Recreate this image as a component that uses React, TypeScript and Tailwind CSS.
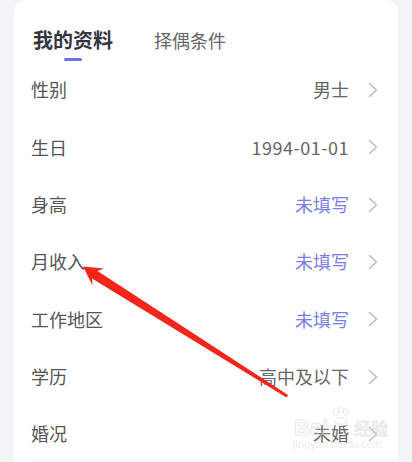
import React from "react";

const rows: { label: string; value: string; blue?: boolean; digits?: boolean }[] = [
  { label: "性别", value: "男士" },
  { label: "生日", value: "1994-01-01", digits: true },
  { label: "身高", value: "未填写", blue: true },
  { label: "月收入", value: "未填写", blue: true },
  { label: "工作地区", value: "未填写", blue: true },
  { label: "学历", value: "高中及以下" },
  { label: "婚况", value: "未婚" },
];

function Chevron() {
  return (
    <svg width="10" height="16" viewBox="0 0 10 16" fill="none" className="shrink-0">
      <path d="M1.5 1.5 L8.5 8 L1.5 14.5" stroke="#b8b8b8" strokeWidth="1.4" strokeLinecap="round" strokeLinejoin="round" />
    </svg>
  );
}

export default function App() {
  const font = { fontFamily: '"Noto Sans CJK SC", "Noto Sans", sans-serif' };
  return (
    <div className="relative w-[412px] h-[462px] overflow-hidden bg-[#f3f4f6]" style={font}>
      <div className="ml-[14px] w-[384px] h-[480px] bg-white rounded-t-[12px]">
        <div className="h-[61.33px] flex items-start pl-[19px] pt-[25px] gap-[41px]">
          <div className="flex flex-col items-center">
            <span className="text-[20px] leading-[30px] font-bold text-[#333640]">我的资料</span>
            <span className="mt-[3px] w-[18px] h-[3px] rounded-full bg-[#6e72ec]" />
          </div>
          <span className="text-[18px] leading-[30px] text-[#666]">择偶条件</span>
        </div>
        {rows.map((r) => (
          <div key={r.label} className="h-[57.33px] flex items-center justify-between pl-[17px] pr-[20px]">
            <span className="text-[18px] text-[#555]">{r.label}</span>
            <div className="flex items-center gap-[19px]">
              <span
                className={
                  "text-[18px] " +
                  (r.blue ? "text-[#7b7fe4]" : "text-[#666]") +
                  (r.digits ? " tracking-[0.5px]" : "")
                }
              >
                {r.value}
              </span>
              <Chevron />
            </div>
          </div>
        ))}
      </div>
      <div className="absolute left-[31px] right-[14px] top-[460px] h-[1px] bg-[#eeeeee]" />
      {/* watermark */}
      <div className="absolute left-[292px] top-[404px] w-[100px] h-[50px] pointer-events-none opacity-60">
        <svg className="absolute left-[38px] top-[2px]" width="22" height="20" viewBox="0 0 22 20">
          <g fill="none" stroke="#d8d8d8" strokeWidth="1">
            <ellipse cx="6" cy="6" rx="2.5" ry="3.2" />
            <ellipse cx="11" cy="3.5" rx="2.5" ry="3" />
            <ellipse cx="16" cy="6" rx="2.5" ry="3.2" />
            <path d="M5 16 C6 10 16 10 17 16 C16 19 6 19 5 16Z" />
          </g>
        </svg>
        <span className="absolute left-[2px] top-[12px] text-[22px] leading-[24px] font-bold text-transparent" style={{ WebkitTextStroke: "1px #dcdcdc", fontFamily: '"Liberation Sans", sans-serif' }}>Bai</span>
        <span className="absolute left-[62px] top-[13px] text-[17px] leading-[22px] text-transparent" style={{ WebkitTextStroke: "1px #dcdcdc" }}>经验</span>
        <span className="absolute left-[1px] top-[33px] text-[11px] leading-[14px] text-[#e2e2e2]" style={{ fontFamily: '"Liberation Sans", sans-serif' }}>jingyan.baidu.com</span>
      </div>
      {/* red arrow */}
      <svg className="absolute left-0 top-0 pointer-events-none" width="412" height="462" viewBox="0 0 412 462">
        <polygon
          points="83,266.5 104,268.5 97.5,271 288,395 286.5,397.5 92,278.5 92.5,285.5"
          fill="#f4261c"
        />
      </svg>
    </div>
  );
}
